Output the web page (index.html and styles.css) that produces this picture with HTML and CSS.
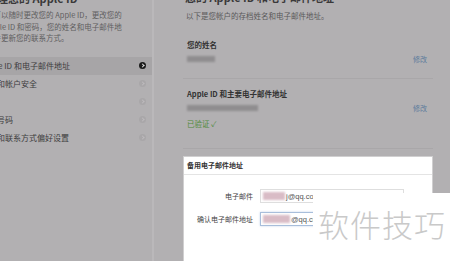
FILE: index.html
```html
<!DOCTYPE html>
<html lang="zh-CN">
<head>
    <meta charset="UTF-8">
    <meta name="viewport" content="width=device-width, initial-scale=1.0">
    <title>Apple ID 和电子邮件地址</title>
    <link rel="stylesheet" href="styles.css">
</head>
<body>
    <div class="page">
        <aside class="sidebar">
            <div class="side-title">管理您的 Apple ID</div>
            <p class="side-desc">您可以随时更改您的 Apple ID，更改您的<br>Apple ID 和密码，您的姓名和电子邮件地<br>址并更新您的联系方式。</p>
            <ul class="side-nav">
                <li class="active"><span>Apple ID 和电子邮件地址</span><i class="arrow"></i></li>
                <li><span>密码和帐户安全</span><i class="arrow"></i></li>
                <li><span>设备</span><i class="arrow"></i></li>
                <li><span>电话号码</span><i class="arrow"></i></li>
                <li><span>通知和联系方式偏好设置</span><i class="arrow"></i></li>
            </ul>
        </aside>

        <main class="content">
            <h1>您的 Apple ID 和电子邮件地址</h1>
            <p class="lead">以下是您帐户的存档姓名和电子邮件地址。</p>

            <section class="field first">
                <div class="field-label">您的姓名</div>
                <div class="field-row">
                    <span class="blur name"></span>
                    <a class="edit">修改</a>
                </div>
            </section>

            <section class="field second">
                <div class="field-label">Apple ID 和主要电子邮件地址</div>
                <div class="field-row">
                    <span class="blur email"></span>
                    <a class="edit">修改</a>
                </div>
                <div class="verified">已验证 ✓</div>
            </section>

            <div class="modal">
                <div class="modal-head">备用电子邮件地址</div>
                <div class="modal-body">
                    <div class="form-row">
                        <label>电子邮件</label>
                        <div class="input"><span class="smudge"></span>j@qq.com</div>
                    </div>
                    <div class="form-row">
                        <label>确认电子邮件地址</label>
                        <div class="input focus"><span class="smudge wide"></span>@qq.com</div>
                    </div>
                </div>
            </div>
        </main>
    </div>

    <div class="watermark">软件技巧</div>
</body>
</html>
```

FILE: styles.css
```css
body {
    margin: 0;
    width: 450px;
    height: 261px;
    overflow: hidden;
    background-color: #b2b0b2;
    font-family: "Noto Sans CJK SC", "Noto Sans", sans-serif;
    color: #333;
}
.page {
    display: flex;
    height: 261px;
}

/* sidebar */
.sidebar {
    width: 152px;
    flex-shrink: 0;
    overflow: hidden;
    border-right: 2px solid #bab8ba;
}
.side-title {
    margin: -9px 0 0 -14px;
    font-size: 11px;
    line-height: 14px;
    font-weight: bold;
    color: #3a393a;
    white-space: nowrap;
}
.side-desc {
    margin: 4px 0 0 -14px;
    font-size: 7.5px;
    line-height: 11.5px;
    color: #5f5e5f;
    white-space: nowrap;
}
.side-nav {
    list-style: none;
    margin: 13px 0 0;
    padding: 0;
}
.side-nav li {
    display: flex;
    align-items: center;
    justify-content: space-between;
    height: 18px;
    padding-right: 6px;
    font-size: 8px;
    color: #3d3c3d;
    white-space: nowrap;
}
.side-nav li span {
    margin-left: -19px;
}
.side-nav li.active {
    background-color: #a7a5a7;
}
.arrow {
    position: relative;
    width: 7px;
    height: 7px;
    border-radius: 50%;
    background-color: #a9a7a9;
}
.arrow::after {
    content: "";
    position: absolute;
    left: 1.5px;
    top: 2px;
    width: 2px;
    height: 2px;
    border-top: 1px solid #bdbbbd;
    border-right: 1px solid #bdbbbd;
    transform: rotate(45deg);
}
.active .arrow {
    background-color: #1c1c1c;
}
.active .arrow::after {
    border-color: #e6e6e6;
}

/* main column */
.content {
    flex: 1;
    display: flex;
    flex-direction: column;
    padding: 0 17px 0 29px;
}
h1 {
    margin: -10px 0 0 2px;
    font-size: 11px;
    line-height: 14px;
    color: #3a393a;
    white-space: nowrap;
}
.lead {
    margin: 6px 0 0 3px;
    font-size: 7.5px;
    line-height: 11px;
    color: #5a595a;
}
.field {
    padding: 0 6px 0 4px;
    border-bottom: 1px solid #a9a7a9;
}
.field.first {
    padding-top: 18px;
    padding-bottom: 13px;
}
.field.second {
    padding-top: 9px;
    padding-bottom: 19px;
}
.field-label {
    font-size: 7.5px;
    line-height: 11px;
    font-weight: bold;
    color: #333;
}
.field-row {
    display: flex;
    align-items: center;
    justify-content: space-between;
    height: 12px;
    margin-top: 3px;
}
.blur {
    height: 6px;
    background-color: #8f8d8f;
    filter: blur(1px);
}
.blur.name {
    width: 28px;
}
.blur.email {
    width: 71px;
}
.edit {
    font-size: 7px;
    color: #5b7b9c;
}
.verified {
    margin-top: 4px;
    font-size: 7.5px;
    line-height: 11px;
    color: #4f8a3a;
}

/* alternate e-mail dialog */
.modal {
    flex: 1;
    margin-top: 7px;
    background-color: #fff;
    border: 1px solid #d0cfd0;
    border-bottom: none;
}
.modal-head {
    height: 17px;
    padding-left: 3px;
    font-size: 7px;
    line-height: 17px;
    font-weight: bold;
    color: #333;
    border-bottom: 1px solid #e4e4e4;
}
.modal-body {
    padding-top: 14px;
    display: flex;
    flex-direction: column;
    gap: 9px;
}
.form-row {
    display: flex;
    align-items: center;
    gap: 7px;
}
.form-row label {
    width: 69px;
    text-align: right;
    font-size: 7px;
    color: #444;
}
.input {
    display: flex;
    align-items: center;
    width: 140px;
    height: 12px;
    padding-left: 2px;
    border: 1px solid #dedede;
    font-family: "Liberation Sans", sans-serif;
    font-size: 7.5px;
    color: #555;
}
.input.focus {
    border-color: #a8bedb;
    box-shadow: 0 0 2px #c3d4ea;
}
.smudge {
    width: 22px;
    height: 8px;
    margin-right: 1px;
    background-color: #d9bcc6;
    filter: blur(1.2px);
}
.smudge.wide {
    width: 27px;
}

/* overlay stamp */
.watermark {
    position: absolute;
    left: 313px;
    top: 193px;
    right: 0;
    bottom: 0;
    padding: 11px 0 0 5px;
    background-color: #fff;
    font-size: 31px;
    line-height: 40px;
    letter-spacing: 1px;
    font-weight: 300;
    color: #c9c9c9;
    white-space: nowrap;
}
```
